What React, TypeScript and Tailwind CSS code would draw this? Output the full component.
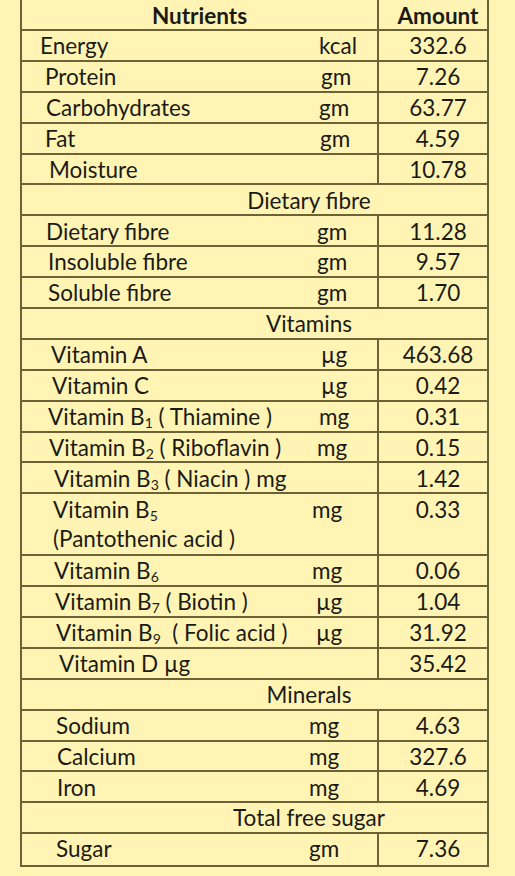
import React from 'react';

type Row =
  | { kind: 'item'; name: React.ReactNode; pad: string; nameW: string; unit?: string; amount: string; tall?: boolean; extra?: string }
  | { kind: 'section'; title: string };

const Sub = ({ children }: { children: React.ReactNode }) => (
  <sub className="text-[14px] bottom-[-3px]">{children}</sub>
);

const ROWS: Row[] = [
  { kind: 'item', name: 'Energy', pad: 'pl-[18px]', nameW: 'w-[297px]', unit: 'kcal', amount: '332.6' },
  { kind: 'item', name: 'Protein', pad: 'pl-[23px]', nameW: 'w-[299px]', unit: 'gm', amount: '7.26' },
  { kind: 'item', name: 'Carbohydrates', pad: 'pl-[24px]', nameW: 'w-[297px]', unit: 'gm', amount: '63.77' },
  { kind: 'item', name: 'Fat', pad: 'pl-[23px]', nameW: 'w-[298px]', unit: 'gm', amount: '4.59' },
  { kind: 'item', name: 'Moisture', pad: 'pl-[27px]', nameW: 'w-[298px]', amount: '10.78' },
  { kind: 'section', title: 'Dietary fibre' },
  { kind: 'item', name: 'Dietary fibre', pad: 'pl-[24px]', nameW: 'w-[295px]', unit: 'gm', amount: '11.28' },
  { kind: 'item', name: 'Insoluble fibre', pad: 'pl-[26px]', nameW: 'w-[295px]', unit: 'gm', amount: '9.57' },
  { kind: 'item', name: 'Soluble fibre', pad: 'pl-[26px]', nameW: 'w-[295px]', unit: 'gm', amount: '1.70' },
  { kind: 'section', title: 'Vitamins' },
  { kind: 'item', name: 'Vitamin A', pad: 'pl-[29px]', nameW: 'w-[299px]', unit: 'µg', amount: '463.68' },
  { kind: 'item', name: 'Vitamin C', pad: 'pl-[30px]', nameW: 'w-[299px]', unit: 'µg', amount: '0.42' },
  { kind: 'item', name: <>Vitamin B<Sub>1</Sub> ( Thiamine )</>, pad: 'pl-[26px]', nameW: 'w-[297px]', unit: 'mg', amount: '0.31' },
  { kind: 'item', name: <>Vitamin B<Sub>2</Sub> ( Riboflavin )</>, pad: 'pl-[27px]', nameW: 'w-[295px]', unit: 'mg', amount: '0.15' },
  { kind: 'item', name: <>Vitamin B<Sub>3</Sub> ( Niacin ) mg</>, pad: 'pl-[32px]', nameW: 'w-[298px]', amount: '1.42' },
  { kind: 'item', name: <>Vitamin B<Sub>5</Sub></>, pad: 'pl-[31px]', nameW: 'w-[290px]', unit: 'mg', amount: '0.33', tall: true, extra: '(Pantothenic acid )' },
  { kind: 'item', name: <>Vitamin B<Sub>6</Sub></>, pad: 'pl-[32px]', nameW: 'w-[290px]', unit: 'mg', amount: '0.06' },
  { kind: 'item', name: <>Vitamin B<Sub>7</Sub> ( Biotin )</>, pad: 'pl-[33px]', nameW: 'w-[294px]', unit: 'µg', amount: '1.04' },
  { kind: 'item', name: <>Vitamin B<Sub>9</Sub>&nbsp; ( Folic acid )</>, pad: 'pl-[34px]', nameW: 'w-[294px]', unit: 'µg', amount: '31.92' },
  { kind: 'item', name: 'Vitamin D µg', pad: 'pl-[37px]', nameW: 'w-[298px]', amount: '35.42' },
  { kind: 'section', title: 'Minerals' },
  { kind: 'item', name: 'Sodium', pad: 'pl-[34px]', nameW: 'w-[287px]', unit: 'mg', amount: '4.63' },
  { kind: 'item', name: 'Calcium', pad: 'pl-[35px]', nameW: 'w-[287px]', unit: 'mg', amount: '327.6' },
  { kind: 'item', name: 'Iron', pad: 'pl-[35px]', nameW: 'w-[287px]', unit: 'mg', amount: '4.69' },
  { kind: 'section', title: 'Total free sugar' },
  { kind: 'item', name: 'Sugar', pad: 'pl-[34px]', nameW: 'w-[287px]', unit: 'gm', amount: '7.36' },
];

export default function App() {
  return (
    <div className="w-[515px] h-[876px] bg-[#fff4b3] pl-[20px] text-[#1b1b16] font-['Lato',sans-serif] text-[22.5px] leading-none overflow-hidden">
      <div className="w-[469px] border-x-2 border-b-2 border-[#6b6236]">
        {/* header */}
        <div className="flex h-[31px] pt-[3px] border-b-2 border-[#6b6236] font-bold">
          <div className="w-[357px] border-r-2 border-[#6b6236] -mt-[3px] pt-[3px] flex items-center justify-center">Nutrients</div>
          <div className="flex-1 flex items-center justify-center pl-[10px]">Amount</div>
        </div>

        {ROWS.map((row, i) => {
          const last = i === ROWS.length - 1;
          const rowBorder = last ? '' : 'border-b-2 border-[#6b6236]';
          if (row.kind === 'section') {
            return (
              <div key={i} className={`h-[30.9px] pt-[2px] flex items-center justify-center pl-[109px] ${rowBorder}`}>
                {row.title}
              </div>
            );
          }
          return (
            <div key={i} className={`flex ${row.tall ? 'h-[61.8px]' : 'h-[30.9px]'} ${rowBorder}`}>
              <div className="w-[357px] border-r-2 border-[#6b6236] flex flex-col">
                <div className="h-[29px] pt-[2px] flex items-center whitespace-nowrap">
                  <div className={`${row.nameW} ${row.pad} shrink-0`}>{row.name}</div>
                  {row.unit && <div>{row.unit}</div>}
                </div>
                {row.extra && (
                  <div className={`h-[31px] pt-[2px] flex items-center whitespace-nowrap ${row.pad}`}>{row.extra}</div>
                )}
              </div>
              <div className="flex-1 flex flex-col">
                <div className="h-[29px] pt-[2px] flex items-center justify-center pl-[10px]">{row.amount}</div>
              </div>
            </div>
          );
        })}
      </div>
    </div>
  );
}
